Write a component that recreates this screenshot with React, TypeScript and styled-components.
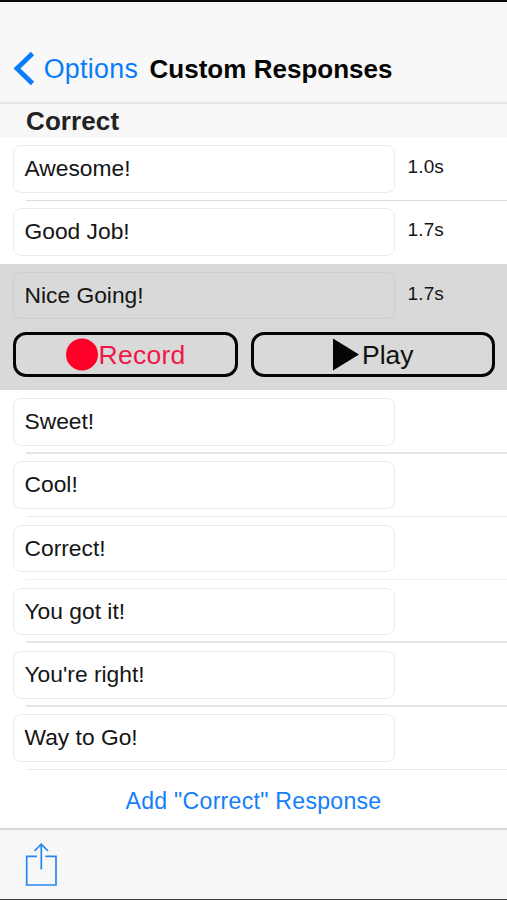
import React from 'react';
import styled, { createGlobalStyle } from 'styled-components';

const GlobalStyle = createGlobalStyle`
  *, *::before, *::after { box-sizing: border-box; }
  html, body { margin: 0; padding: 0; background: #fff; }
  body { overflow: hidden; }
`;

const Screen = styled.div`
  display: flex;
  flex-direction: column;
  width: 507px;
  height: 900px;
  overflow: hidden;
  border-top: 2px solid #0c090b;
  border-bottom: 1px solid #3c3c3c;
  background: #fff;
  color: #151515;
  font-family: 'Liberation Sans', Arial, Helvetica, sans-serif;
`;

const NavBar = styled.header`
  display: flex;
  flex: none;
  align-items: flex-start;
  height: 102px;
  padding: 50px 0 0 14px;
  background: #f8f8f8;
  border-bottom: 2px solid #e4e4e4;
`;

const BackButton = styled.button`
  display: flex;
  align-items: flex-start;
  width: 135.5px;
  padding: 0;
  border: 0;
  background: none;
  color: #087dfb;
  font: 26.8px/34px 'Liberation Sans', Arial, sans-serif;
  letter-spacing: 0.3px;
  white-space: nowrap;

  svg { flex: none; margin-right: 8.7px; }
`;

const Title = styled.h1`
  margin: 0;
  color: #050505;
  font-size: 26px;
  font-weight: 700;
  line-height: 34px;
  letter-spacing: 0.02px;
  white-space: nowrap;
`;

const SectionHeader = styled.h2`
  flex: none;
  height: 33px;
  margin: 0;
  padding-left: 26px;
  background: #f7f7f7;
  color: #222;
  font-size: 26px;
  font-weight: 700;
  line-height: 35px;
  letter-spacing: 0.1px;
`;

const List = styled.ul`
  display: flex;
  flex: none;
  flex-direction: column;
  height: 633px;
  margin: 0;
  padding: 0.25px 0 0;
  list-style: none;
`;

const Row = styled.li<{ $selected?: boolean }>`
  display: flex;
  flex: none;
  flex-direction: column;
  height: ${p => (p.$selected ? 126.5 : 63.25)}px;
  padding-top: 7.75px;
  background: ${p => (p.$selected ? '#d9d9d9' : 'transparent')};
`;

const RowMain = styled.div`
  display: flex;
  flex: none;
  height: 47.5px;
  padding-left: 13px;
`;

const Field = styled.div<{ $selected?: boolean }>`
  width: 382px;
  height: 47.5px;
  padding-left: 10.5px;
  border: 1.5px solid ${p => (p.$selected ? '#cdcdcd' : '#ebebeb')};
  border-radius: 8px;
  font-size: 22.8px;
  line-height: 44.5px;
  white-space: nowrap;
`;

const Duration = styled.span`
  margin-left: 12.5px;
  font-size: 19px;
  line-height: 43.5px;
  letter-spacing: 0.15px;
`;

const Separator = styled.div<{ $tone: string; $weight: number }>`
  height: ${p => p.$weight}px;
  margin: auto 0 0 26px;
  background: ${p => p.$tone};
`;

const Actions = styled.div`
  display: flex;
  gap: 13px;
  margin-top: 13px;
  padding: 0 12px 0 13px;
`;

const ActionButton = styled.button<{ $width: number; $color: string; $spacing: number }>`
  display: flex;
  align-items: center;
  justify-content: center;
  width: ${p => p.$width}px;
  height: 45px;
  padding: 0;
  border: 3px solid #050505;
  border-radius: 13px;
  background: transparent;
  color: ${p => p.$color};
  font: 26.5px/38px 'Liberation Sans', Arial, sans-serif;
  letter-spacing: ${p => p.$spacing}px;

  svg { flex: none; }
`;

const AddButton = styled.button`
  flex: none;
  height: 58px;
  padding: 4px 0 0;
  border: 0;
  background: #fff;
  color: #147efb;
  font: 23.1px/30px 'Liberation Sans', Arial, sans-serif;
  letter-spacing: 0.27px;
  text-align: center;
`;

const Toolbar = styled.footer`
  flex: 1;
  padding: 13px 0 0 25px;
  border-top: 2px solid #d9d9d9;
  background: #f7f7f7;

  svg { display: block; }
`;

interface Response {
  text: string;
  duration?: string;
  selected?: boolean;
  tone?: string;
  weight?: number;
}

const responses: Response[] = [
  { text: 'Awesome!', duration: '1.0s', tone: '#dcdcdc' },
  { text: 'Good Job!', duration: '1.7s' },
  { text: 'Nice Going!', duration: '1.7s', selected: true },
  { text: 'Sweet!', tone: '#e5e5e5', weight: 2 },
  { text: 'Cool!', tone: '#ebebeb' },
  { text: 'Correct!', tone: '#f1f1f1' },
  { text: 'You got it!', tone: '#e7e7e7', weight: 2 },
  { text: "You're right!", tone: '#e5e5e5', weight: 2 },
  { text: 'Way to Go!', tone: '#ebebeb' },
];

const BackIcon = () => (
  <svg width="21" height="34" viewBox="0 0 21 34" fill="none">
    <path d="M18.5 1.5 3 16.5l15.5 15" stroke="#087dfb" strokeWidth="4.8" />
  </svg>
);

const RecordIcon = () => (
  <svg width="33" height="34" viewBox="0 0 33 34">
    <circle cx="16" cy="16.5" r="16" fill="#ff0029" />
  </svg>
);

const PlayIcon = () => (
  <svg width="30" height="34" viewBox="0 0 30 34">
    <path d="M1 .5 27 16.5 1 32.5Z" fill="#050505" />
  </svg>
);

const ShareIcon = () => (
  <svg width="33" height="45" viewBox="0 0 33 45" fill="none" stroke="#2a86ee" strokeWidth="1.7">
    <path d="M12 13.3H1.7v28.7H31V13.3H20.3M16.3 26.5V1.5M9.5 8l6.8-6.8L23 8" />
  </svg>
);

export default function App() {
  return (
    <>
      <GlobalStyle />
      <Screen>
        <NavBar>
          <BackButton><BackIcon />Options</BackButton>
          <Title>Custom Responses</Title>
        </NavBar>
        <SectionHeader>Correct</SectionHeader>
        <List>
          {responses.map(r => (
            <Row key={r.text} $selected={r.selected}>
              <RowMain>
                <Field $selected={r.selected}>{r.text}</Field>
                {r.duration && <Duration>{r.duration}</Duration>}
              </RowMain>
              {r.selected && (
                <Actions>
                  <ActionButton $width={225} $color="#f01746" $spacing={0.25}><RecordIcon />Record</ActionButton>
                  <ActionButton $width={243.5} $color="#111" $spacing={0}><PlayIcon />Play</ActionButton>
                </Actions>
              )}
              {r.tone && <Separator $tone={r.tone} $weight={r.weight ?? 1} />}
            </Row>
          ))}
        </List>
        <AddButton>Add "Correct" Response</AddButton>
        <Toolbar><ShareIcon /></Toolbar>
      </Screen>
    </>
  );
}
